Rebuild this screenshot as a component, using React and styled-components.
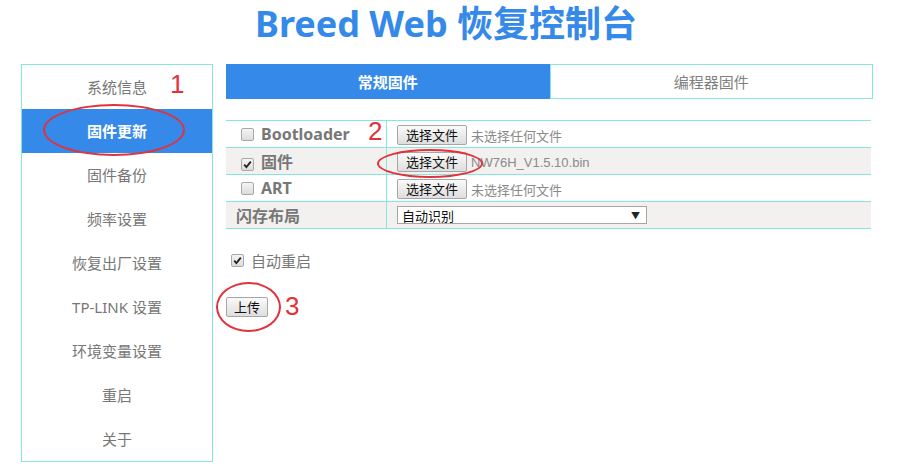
import React from 'react';
import styled, { createGlobalStyle } from 'styled-components';

const BLUE = '#3589e9';
const TEAL = '#86e8d9';
const RED = '#e2323b';

const GlobalStyle = createGlobalStyle`
body {
  margin: 0;
  background: #ffffff;
  font-family: "Noto Sans", "Noto Sans CJK SC", sans-serif;
}
`;

const menu = [
  '系统信息',
  '固件更新',
  '固件备份',
  '频率设置',
  '恢复出厂设置',
  'TP-LINK 设置',
  '环境变量设置',
  '重启',
  '关于',
];

const firmwareRows = [
  { label: 'Bootloader', checked: false, file: null },
  { label: '固件', checked: true, file: 'NW76H_V1.5.10.bin' },
  { label: 'ART', checked: false, file: null },
];

const CheckMark = () => (
  <svg width="9" height="9" viewBox="0 0 9 9">
    <path d="M1.2 4.6 L3.4 7 L7.8 1.6" fill="none" stroke="#222" strokeWidth="1.8" />
  </svg>
);

const App = () => (
  <Page>
    <GlobalStyle />
    <Title>Breed Web 恢复控制台</Title>
    <Main>
      <Sidebar>
        {menu.map((item) => (
          <MenuItem key={item} active={item === '固件更新'}>
            {item}
          </MenuItem>
        ))}
      </Sidebar>
      <Content>
        <Tabs>
          <Tab active>常规固件</Tab>
          <Tab>编程器固件</Tab>
        </Tabs>
        <Table>
          <tbody>
            {firmwareRows.map((row, i) => (
              <Row key={row.label} shaded={i % 2 === 1}>
                <LabelCell>
                  <Box>{row.checked && <CheckMark />}</Box>
                  <RowLabel>{row.label}</RowLabel>
                </LabelCell>
                <ValueCell>
                  <Button>选择文件</Button>
                  <FileName dark={!!row.file}>{row.file || '未选择任何文件'}</FileName>
                </ValueCell>
              </Row>
            ))}
            <Row shaded>
              <LabelCell>
                <RowLabel plain>闪存布局</RowLabel>
              </LabelCell>
              <ValueCell>
                <Select>
                  <span>自动识别</span>
                  <Arrow>▼</Arrow>
                </Select>
              </ValueCell>
            </Row>
          </tbody>
        </Table>
        <Option>
          <Box><CheckMark /></Box>
          自动重启
        </Option>
        <Button wide>上传</Button>
      </Content>
    </Main>

    <Ring style={{ left: 43, top: 104, width: 142, height: 52 }} />
    <Num style={{ left: 170, top: 69 }}>1</Num>
    <Ring style={{ left: 377, top: 149, width: 106, height: 29 }} />
    <Num style={{ left: 368, top: 116 }}>2</Num>
    <Ring style={{ left: 216, top: 282, width: 65, height: 50 }} />
    <Num style={{ left: 285, top: 291 }}>3</Num>
  </Page>
);

const Page = styled.div`
position: relative;
width: 902px;
height: 469px;
overflow: hidden;
`;

const Title = styled.h1`
margin: 0;
padding: 2px 10px 0 0;
height: 62px;
text-align: center;
font-size: 36px;
line-height: 44px;
font-weight: 700;
color: ${BLUE};
font-family: "Noto Sans", "Noto Sans CJK SC", sans-serif;
`;

const Main = styled.div`
display: flex;
align-items: flex-start;
gap: 13px;
padding-left: 21px;
`;

const Sidebar = styled.div`
width: 190px;
border: 1px solid ${TEAL};
`;

const MenuItem = styled.div`
height: 44px;
line-height: 44px;
text-align: center;
font-size: 15px;
color: ${({ active }) => (active ? '#ffffff' : '#777777')};
background: ${({ active }) => (active ? BLUE : 'transparent')};
font-weight: ${({ active }) => (active ? 700 : 400)};
`;

const Content = styled.div`
width: 647px;
display: flex;
flex-direction: column;
align-items: flex-start;
`;

const Tabs = styled.div`
display: flex;
width: 100%;
height: 35px;
`;

const Tab = styled.div`
flex: 1;
display: flex;
align-items: center;
justify-content: center;
font-size: 15px;
background: ${({ active }) => (active ? BLUE : '#ffffff')};
color: ${({ active }) => (active ? '#ffffff' : '#808080')};
font-weight: ${({ active }) => (active ? 700 : 400)};
border: 1px solid ${({ active }) => (active ? BLUE : TEAL)};
`;

const Table = styled.table`
width: 645px;
margin-top: 21px;
border-collapse: collapse;
border-top: 1px solid ${TEAL};
`;

const Row = styled.tr`
height: 27px;
background: ${({ shaded }) => (shaded ? '#f3f1f0' : '#ffffff')};
border-bottom: 1px solid ${TEAL};
`;

const LabelCell = styled.td`
width: 145px;
padding: 0 0 0 15px;
border-right: 1px solid ${TEAL};
white-space: nowrap;
`;

const ValueCell = styled.td`
padding: 0 0 0 10px;
white-space: nowrap;
`;

const Box = styled.span`
display: inline-flex;
align-items: center;
justify-content: center;
width: 11px;
height: 11px;
margin-right: 7px;
border: 1px solid #a8a8a8;
border-radius: 2px;
background: linear-gradient(#f4f4f4, #dcdcdc);
vertical-align: -1px;
`;

const RowLabel = styled.span`
font-size: 16px;
font-weight: 700;
color: #777777;
margin-left: ${({ plain }) => (plain ? '-5px' : '0')};
`;

const Button = styled.button`
height: 20px;
padding: 0 ${({ wide }) => (wide ? '7px' : '8px')};
margin-top: ${({ wide }) => (wide ? '26px' : '0')};
font-size: 13px;
line-height: 18px;
color: #111111;
font-family: "Noto Sans CJK SC", sans-serif;
background: linear-gradient(#fafafa, #dedede);
border: 1px solid #a6a6a6;
border-radius: 2px;
vertical-align: middle;
`;

const FileName = styled.span`
margin-left: 4px;
font-size: 13px;
color: #8a8a8a;
font-family: ${({ dark }) => (dark ? '"Liberation Sans", sans-serif' : '"Noto Sans CJK SC", sans-serif')};
vertical-align: middle;
`;

const Select = styled.div`
display: flex;
align-items: center;
justify-content: space-between;
width: 250px;
height: 18px;
padding: 0 6px 0 4px;
box-sizing: border-box;
border: 1px solid #a6a6a6;
background: #ffffff;
font-size: 13px;
color: #111111;
font-family: "Noto Sans CJK SC", sans-serif;
`;

const Arrow = styled.span`
font-size: 9px;
color: #222222;
`;

const Option = styled.div`
display: flex;
align-items: center;
margin: 21px 0 0 5px;
font-size: 15px;
color: #777777;
`;

const Ring = styled.div`
position: absolute;
box-sizing: border-box;
border: 2px solid ${RED};
border-radius: 50%;
`;

const Num = styled.span`
position: absolute;
font-size: 26px;
line-height: 30px;
color: ${RED};
font-family: "Liberation Sans", sans-serif;
`;

export default App;
